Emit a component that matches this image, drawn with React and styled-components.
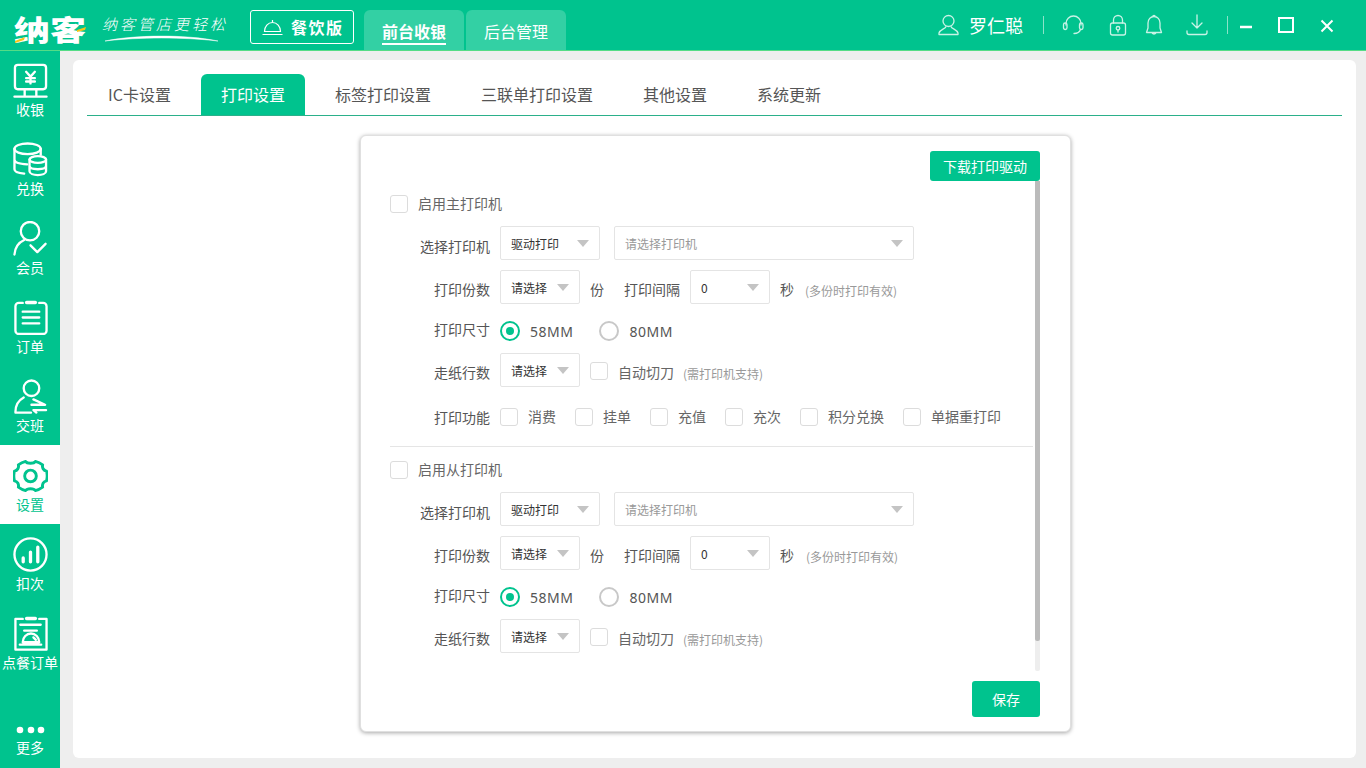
import React from "react";
import styled, { createGlobalStyle } from "styled-components";

const GREEN = "#00c38e";
const CJK = `"Noto Sans CJK SC", "Noto Sans", sans-serif`;

const GlobalStyle = createGlobalStyle`
  html, body { margin: 0; padding: 0; height: 100%; overflow: hidden; }
  body { font-family: ${CJK}; background: #eeeeee; color: #555; }
  * { box-sizing: border-box; }
`;

const Page = styled.div`
  width: 1366px;
  height: 768px;
  display: flex;
  flex-direction: column;
  overflow: hidden;
`;

const TopBar = styled.header`
  height: 51px;
  flex: none;
  background: ${GREEN};
  border-bottom: 1px solid #55dc86;
  display: flex;
  align-items: flex-end;
  padding-left: 14px;
`;

const Logo = styled.div`
  width: 72px;
  height: 44px;
  position: relative;
  color: #fff;
  font-size: 36px;
  line-height: 44px;
  font-weight: 900;
  white-space: nowrap;
`;

const LogoText = styled.span`
  display: block;
  transform: scaleY(0.8);
`;

const LogoAccent = styled.svg`
  position: absolute;
  left: 0;
  top: 0;
`;

const Slogan = styled.div`
  width: 136px;
  height: 32px;
  margin: 0 0 7px 16px;
  position: relative;
  color: #fff;
  font-size: 15px;
  letter-spacing: 3px;
  line-height: 26px;
  font-weight: 300;
  font-style: italic;
  white-space: nowrap;
`;

const Swoosh = styled.svg`
  position: absolute;
  left: 2px;
  top: 23px;
`;

const EditionBadge = styled.div`
  width: 104px;
  height: 34px;
  margin: 0 10px 6px 12px;
  border: 1px solid #fff;
  border-radius: 3px;
  display: flex;
  align-items: center;
  gap: 8px;
  padding-left: 11px;
  color: #fff;
  font-size: 16px;
  letter-spacing: 1.5px;
  font-weight: 700;
`;

const ModeTab = styled.div`
  width: 100px;
  height: 40px;
  margin-right: 2px;
  padding-top: 9px;
  background: #33d0a4;
  border-radius: 6px 6px 0 0;
  display: flex;
  justify-content: center;
  align-items: flex-start;
  color: #fff;
  font-size: 16px;
  font-weight: ${(p) => (p.$active ? 700 : 400)};
  span {
    line-height: 24px;
    border-bottom: 2px solid ${(p) => (p.$active ? "#fff" : "transparent")};
  }
`;

const TopRight = styled.div`
  margin-left: auto;
  height: 50px;
  padding-right: 32px;
  display: flex;
  align-items: center;
  color: #fff;
`;

const UserName = styled.span`
  font-size: 18px;
  margin-left: 9px;
  width: 56px;
  white-space: nowrap;
`;

const Divider = styled.i`
  width: 1px;
  height: 18px;
  margin-left: ${(p) => p.$ml}px;
  background: #8be3c9;
`;

const HeadIcon = styled.svg.attrs({
  width: 22,
  height: 22,
  viewBox: "0 0 22 22",
  fill: "none",
  stroke: "#c8f3e6",
  strokeWidth: 1.3,
  strokeLinecap: "round",
  strokeLinejoin: "round",
})`
  flex: none;
  margin-left: ${(p) => p.$ml || 0}px;
`;

const WindowIcon = styled.svg.attrs({
  fill: "none",
  stroke: "#fff",
  strokeWidth: 2,
})`
  flex: none;
  margin-left: ${(p) => p.$ml}px;
`;

const Body = styled.div`
  flex: 1;
  display: flex;
  min-height: 0;
`;

const Sidebar = styled.nav`
  width: 60px;
  flex: none;
  background: ${GREEN};
  display: flex;
  flex-direction: column;
`;

const NavItem = styled.div`
  height: 79px;
  flex: none;
  display: flex;
  flex-direction: column;
  align-items: center;
  justify-content: flex-end;
  padding-bottom: ${(p) => (p.$push ? 12 : 11)}px;
  font-size: 14px;
  line-height: 18px;
  white-space: nowrap;
  color: ${(p) => (p.$active ? GREEN : "#fff")};
  background: ${(p) => (p.$active ? "#fff" : "transparent")};
  margin-top: ${(p) => (p.$push ? "auto" : 0)};
  &:first-child { height: 78px; }
  svg { flex: none; margin-bottom: 2px; }
`;

const Main = styled.main`
  flex: 1;
  margin: 9px 10px 10px 13px;
  background: #fff;
  border-radius: 6px;
  padding: 10px 14px 0;
  display: flex;
  flex-direction: column;
  min-width: 0;
`;

const Tabs = styled.div`
  display: flex;
  height: 46px;
  flex: none;
  padding-left: 1px;
  border-bottom: 1px solid #2bb08a;
`;

const Tab = styled.div`
  height: 41px;
  margin: 4px 10px 0 0;
  padding: 0 20px 2px;
  display: flex;
  align-items: center;
  border-radius: 6px 6px 0 0;
  font-size: 16px;
  color: ${(p) => (p.$active ? "#fff" : "#555")};
  background: ${(p) => (p.$active ? GREEN : "transparent")};
`;

const Card = styled.section`
  width: 711px;
  height: 597px;
  margin: 19px 0 0 273px;
  background: #fff;
  border: 1px solid #e0e0e0;
  border-radius: 6px;
  box-shadow: 0 1px 4px rgba(0, 0, 0, 0.35);
  padding: 15px 30px 0 29px;
  display: flex;
  flex-direction: column;
`;

const ActionRow = styled.div`
  display: flex;
  justify-content: flex-end;
  flex: none;
  margin-top: ${(p) => p.$mt || 0}px;
`;

const GreenButton = styled.button`
  height: ${(p) => p.$h}px;
  width: ${(p) => p.$w}px;
  border: 0;
  border-radius: 3px;
  padding: 0;
  background: ${GREEN};
  color: #fff;
  font-family: ${CJK};
  font-size: 14px;
`;

const ScrollArea = styled.div`
  height: 490px;
  flex: none;
  position: relative;
`;

const Track = styled.div`
  position: absolute;
  right: 0;
  top: 0;
  width: 5px;
  height: 490px;
  background: #eeeeee;
  border-radius: 2px;
`;

const Thumb = styled.div`
  height: 460px;
  background: #bbbbbb;
  border-radius: 0 0 2px 2px;
`;

const Group = styled.div`
  padding-top: 13px;
  height: ${(p) => p.$h}px;
  border-bottom: ${(p) => (p.$line ? "1px solid #e5e5e5" : "0")};
  margin-right: 7px;
`;

const EnableRow = styled.label`
  display: flex;
  align-items: center;
  gap: 10px;
  height: 20px;
  font-size: 14px;
  color: #666;
  margin-bottom: 12px;
`;

const Box = styled.span`
  width: 18px;
  height: 18px;
  flex: none;
  display: block;
  border: 1px solid #dcdcdc;
  border-radius: 3px;
  background: #fff;
  position: relative;
  top: ${(p) => p.$top || 0}px;
`;

const Row = styled.div`
  display: flex;
  align-items: center;
  height: ${(p) => p.$h || 34}px;
  margin-top: ${(p) => p.$mt || 0}px;
  font-size: 14px;
  color: #555;
`;

const RowLabel = styled.span`
  width: 110px;
  flex: none;
  text-align: right;
  padding-right: 10px;
  white-space: nowrap;
  position: relative;
  top: ${(p) => p.$top || 0}px;
`;

const Select = styled.div`
  width: ${(p) => p.$w}px;
  height: 34px;
  flex: none;
  margin-left: ${(p) => p.$ml || 0}px;
  border: 1px solid #e4e4e4;
  border-radius: 2px;
  background: #fff;
  padding: 0 10px;
  display: flex;
  align-items: center;
  justify-content: space-between;
  font-size: 12px;
  color: ${(p) => (p.$placeholder ? "#999" : "#333")};
  &::after {
    content: "";
    border-left: 6px solid transparent;
    border-right: 6px solid transparent;
    border-top: 7px solid #c4c4c4;
  }
`;

const Unit = styled.span`
  margin-left: ${(p) => p.$ml || 0}px;
  white-space: nowrap;
  color: #555;
  position: relative;
  top: 2px;
`;

const Hint = styled.span`
  margin-left: ${(p) => p.$ml || 0}px;
  font-size: 12px;
  color: #999;
  white-space: nowrap;
  position: relative;
  top: 3px;
`;

const Radio = styled.span`
  width: 20px;
  height: 20px;
  flex: none;
  border-radius: 50%;
  border: 2px solid ${(p) => (p.$on ? GREEN : "#c8c8c8")};
  margin-left: ${(p) => p.$ml || 0}px;
  display: flex;
  align-items: center;
  justify-content: center;
  &::after {
    content: "";
    width: 8px;
    height: 8px;
    border-radius: 50%;
    background: ${(p) => (p.$on ? GREEN : "transparent")};
  }
`;

const RadioText = styled.span`
  margin-left: 10px;
  font-family: "Noto Sans", ${CJK};
  font-size: 14px;
  letter-spacing: 0.5px;
  color: #555;
`;

const CheckItem = styled.label`
  display: flex;
  align-items: center;
  width: ${(p) => (p.$w ? p.$w + "px" : "auto")};
  margin-left: ${(p) => p.$ml || 0}px;
  flex: none;
  gap: 10px;
  color: #666;
  white-space: nowrap;
`;

const CheckText = styled.span`
  position: relative;
  top: ${(p) => p.$top || 0}px;
`;

const Stroke = ({ vb = "0 0 36 36", children, sw = 2.4 }) => (
  <svg width="35" height="35" viewBox={vb} fill="none" stroke="currentColor" strokeWidth={sw} strokeLinecap="round" strokeLinejoin="round">
    {children}
  </svg>
);

const navItems = [
  {
    label: "收银",
    icon: (
      <Stroke>
        <rect x="2" y="2" width="32" height="25" rx="3" />
        <path d="M13.500 9l4.500 5 4.500-5M18 14v7M13.500 15.500h9M13.500 19h9" />
        <path d="M12 27v7M24 27v7M1.500 34.500h33" />
      </Stroke>
    ),
  },
  {
    label: "兑换",
    icon: (
      <Stroke>
        <ellipse cx="15" cy="7" rx="13.500" ry="5.500" />
        <path d="M1.500 7v21c0 2.500 4 4 10 4.500M1.500 18c0 3 4 4.500 13 5M28.500 7v6" />
        <ellipse cx="25.500" cy="18" rx="8.500" ry="3.500" />
        <path d="M17 18v12c0 2.500 4 4 8.500 4s8.500-1.500 8.500-4V18M17 24.500c0 2.200 4 3.500 8.500 3.500s8.500-1.300 8.500-3.500" />
      </Stroke>
    ),
  },
  {
    label: "会员",
    icon: (
      <Stroke vb="-3 0 36 36">
        <circle cx="14.500" cy="10.500" r="9.500" />
        <path d="M-1.500 34.500C-1 27 3 22 8.500 19.500M15 25l7 7 8.500-8.500" />
      </Stroke>
    ),
  },
  {
    label: "订单",
    icon: (
      <Stroke>
        <path d="M10 3H6a3.500 3.500 0 0 0-3.500 3.500v25A3.500 3.500 0 0 0 6 35h25a3.500 3.500 0 0 0 3.500-3.500v-25A3.500 3.500 0 0 0 31 3h-4" />
        <path d="M14 2.500h9" strokeWidth="3.500" />
        <path d="M10 12h17M10 18h17M10 24h17" />
      </Stroke>
    ),
  },
  {
    label: "交班",
    icon: (
      <Stroke>
        <circle cx="19" cy="9.500" r="8" />
        <path d="M2.500 34c0-7 3-12 8.500-15M2.500 34.500h16M21 21l12 5.500H19M34 32H21l3 2.500" />
      </Stroke>
    ),
  },
  {
    label: "设置",
    active: true,
    icon: (
      <Stroke sw="3">
        <path d="M13 3.500c1.500 2.500 8.500 2.500 10 0 3.500.8 5.500 2 7.500 3.500-.8 3 1 6 4 6.500.8 3 .8 7 0 10-3 .5-4.800 3.500-4 6.500-2 1.500-4 2.700-7.500 3.500-1.500-2.500-8.500-2.500-10 0-3.500-.8-5.500-2-7.500-3.500.8-3-1-6-4-6.500-.8-3-.8-7 0-10 3-.5 4.800-3.500 4-6.500 2-1.500 4-2.700 7.500-3.500z" />
        <circle cx="18" cy="18.500" r="6" />
      </Stroke>
    ),
  },
  {
    label: "扣次",
    icon: (
      <Stroke>
        <circle cx="18" cy="18" r="16.500" />
        <path d="M10.500 21.500v4M18 15.500v10M25.500 10.500v15" strokeWidth="3.400" />
      </Stroke>
    ),
  },
  {
    label: "点餐订单",
    icon: (
      <Stroke>
        <path d="M10 3H2.500v31.500h32V3H27" />
        <path d="M14 2.500h9" strokeWidth="3.500" />
        <path d="M7.500 9h21M11.500 15h13M7 29.500h22M10 27c0-5 4-9 8.500-9s8.500 4 8.500 9z" />
        <path d="M21 22l2.500 2.500" />
      </Stroke>
    ),
  },
];

const tabs = ["IC卡设置", "打印设置", "标签打印设置", "三联单打印设置", "其他设置", "系统更新"];

const functions = [
  { text: "消费", w: 75 },
  { text: "挂单", w: 75 },
  { text: "充值", w: 75 },
  { text: "充次", w: 75 },
  { text: "积分兑换", w: 103 },
  { text: "单据重打印", w: 100 },
];

const Printer = ({ fn, title, hintGap }) => (
  <>
    <EnableRow>
      <Box />
      <CheckText $top={-1}>{title}</CheckText>
    </EnableRow>
    <Row>
      <RowLabel $top={3}>选择打印机</RowLabel>
      <Select $w={100}>驱动打印</Select>
      <Select $w={300} $ml={14} $placeholder>请选择打印机</Select>
    </Row>
    <Row $mt={10}>
      <RowLabel $top={2}>打印份数</RowLabel>
      <Select $w={80}>请选择</Select>
      <Unit $ml={10}>份</Unit>
      <Unit $ml={20}>打印间隔</Unit>
      <Select $w={80} $ml={10}>0</Select>
      <Unit $ml={10}>秒</Unit>
      <Hint $ml={hintGap}>(多份时打印有效)</Hint>
    </Row>
    <Row $h={20} $mt={17}>
      <RowLabel $top={-2}>打印尺寸</RowLabel>
      <Radio $on />
      <RadioText>58MM</RadioText>
      <Radio $ml={26} />
      <RadioText>80MM</RadioText>
    </Row>
    <Row $mt={12}>
      <RowLabel $top={2}>走纸行数</RowLabel>
      <Select $w={80}>请选择</Select>
      <CheckItem $ml={10}>
        <Box $top={1} />
        <CheckText $top={2}>自动切刀</CheckText>
        <Hint $ml={-1}>(需打印机支持)</Hint>
      </CheckItem>
    </Row>
    {fn && (
      <Row $h={20} $mt={20}>
        <RowLabel>打印功能</RowLabel>
        {functions.map((f) => (
          <CheckItem key={f.text} $w={f.w}>
            <Box />
            <CheckText $top={-1}>{f.text}</CheckText>
          </CheckItem>
        ))}
      </Row>
    )}
  </>
);

const App = () => (
  <Page>
    <GlobalStyle />
    <TopBar>
      <Logo>
        <LogoText>纳客</LogoText>
        <LogoAccent width="72" height="44" viewBox="0 0 72 44">
          <path d="M1 35l10-4-1 3-9 3zM63 24l9-3-1 3-8 2z" fill="#f5c518" />
        </LogoAccent>
      </Logo>
      <Slogan>
        纳客管店更轻松
        <Swoosh width="116" height="9" viewBox="0 0 116 9">
          <path d="M1 7C30 1 80 0 114 7C80 3 35 3 1 7z" fill="#fff" stroke="#fff" strokeWidth=".5" />
        </Swoosh>
      </Slogan>
      <EditionBadge>
        <svg width="21" height="17" viewBox="0 0 21 17" fill="none" stroke="#fff" strokeWidth="1.200">
          <path d="M2.500 12.500c0-5 3.500-9 8-9s8 4 8 9zM.5 15.500h20M10.500 1v2" />
        </svg>
        餐饮版
      </EditionBadge>
      <ModeTab $active><span>前台收银</span></ModeTab>
      <ModeTab><span>后台管理</span></ModeTab>
      <TopRight>
        <HeadIcon>
          <circle cx="10.500" cy="7" r="5.500" />
          <path d="M8 12.500c0 2-6 3-7 6.500v1.500h19V19c-1-3.500-7-4.500-7-6.500" />
        </HeadIcon>
        <UserName>罗仁聪</UserName>
        <Divider $ml={18} />
        <HeadIcon $ml={18}>
          <path d="M4 11V9.500a7.500 7.500 0 0 1 15 0V11" />
          <rect x="1.500" y="9" width="3.500" height="6.500" rx="1.700" />
          <rect x="17.500" y="9" width="3.500" height="6.500" rx="1.700" />
          <path d="M18.500 15.500c-1 3-3.500 4-6.500 4" />
        </HeadIcon>
        <HeadIcon $ml={23}>
          <rect x="3.500" y="9" width="15" height="12" rx="2" />
          <path d="M6.500 9V6a4.500 4.500 0 0 1 9 0v3" />
          <circle cx="11" cy="14.300" r="1.800" />
          <path d="M11 16v2" />
        </HeadIcon>
        <HeadIcon $ml={14}>
          <path d="M11 2.500c-3.500 0-6 3-6 6.500v5l-1.500 4.500h15L17 14V9c0-3.500-2.500-6.500-6-6.500zM9 18.500c0 2 4 2 4 0M9.800 2.500c0-1.500 2.400-1.500 2.400 0" />
        </HeadIcon>
        <HeadIcon $ml={21}>
          <path d="M11 1v13M6 9l5 5 5-5M1 17v1.500c0 1 1 2 2 2h16c1 0 2-1 2-2V17" />
        </HeadIcon>
        <Divider $ml={19} />
        <WindowIcon $ml={12} width="12" height="22" viewBox="0 0 12 22">
          <path d="M0 13h12" strokeWidth="2.500" />
        </WindowIcon>
        <WindowIcon $ml={26} width="16" height="16" viewBox="0 0 16 16">
          <rect x="1" y="1" width="14" height="14" />
        </WindowIcon>
        <WindowIcon $ml={26} width="14" height="16" viewBox="0 0 14 16">
          <path d="M1.500 3.500l11 11M12.500 3.500l-11 11" />
        </WindowIcon>
      </TopRight>
    </TopBar>
    <Body>
      <Sidebar>
        {navItems.map((item) => (
          <NavItem key={item.label} $active={item.active}>
            {item.icon}
            {item.label}
          </NavItem>
        ))}
        <NavItem $push>
          <svg width="30" height="10" viewBox="0 0 30 10" fill="#fff">
            <circle cx="5" cy="4" r="3.300" />
            <circle cx="16" cy="4" r="3.300" />
            <circle cx="26" cy="4" r="3.300" />
          </svg>
          更多
        </NavItem>
      </Sidebar>
      <Main>
        <Tabs>
          {tabs.map((t) => (
            <Tab key={t} $active={t === "打印设置"}>{t}</Tab>
          ))}
        </Tabs>
        <Card>
          <ActionRow>
            <GreenButton $w={110} $h={30}>下载打印驱动</GreenButton>
          </ActionRow>
          <ScrollArea>
            <Track>
              <Thumb />
            </Track>
            <Group $h={266} $line>
              <Printer fn title="启用主打印机" hintGap={11} />
            </Group>
            <Group $h={224}>
              <Printer title="启用从打印机" hintGap={12} />
            </Group>
          </ScrollArea>
          <ActionRow $mt={10}>
            <GreenButton $w={68} $h={36}>保存</GreenButton>
          </ActionRow>
        </Card>
      </Main>
    </Body>
  </Page>
);

export default App;
